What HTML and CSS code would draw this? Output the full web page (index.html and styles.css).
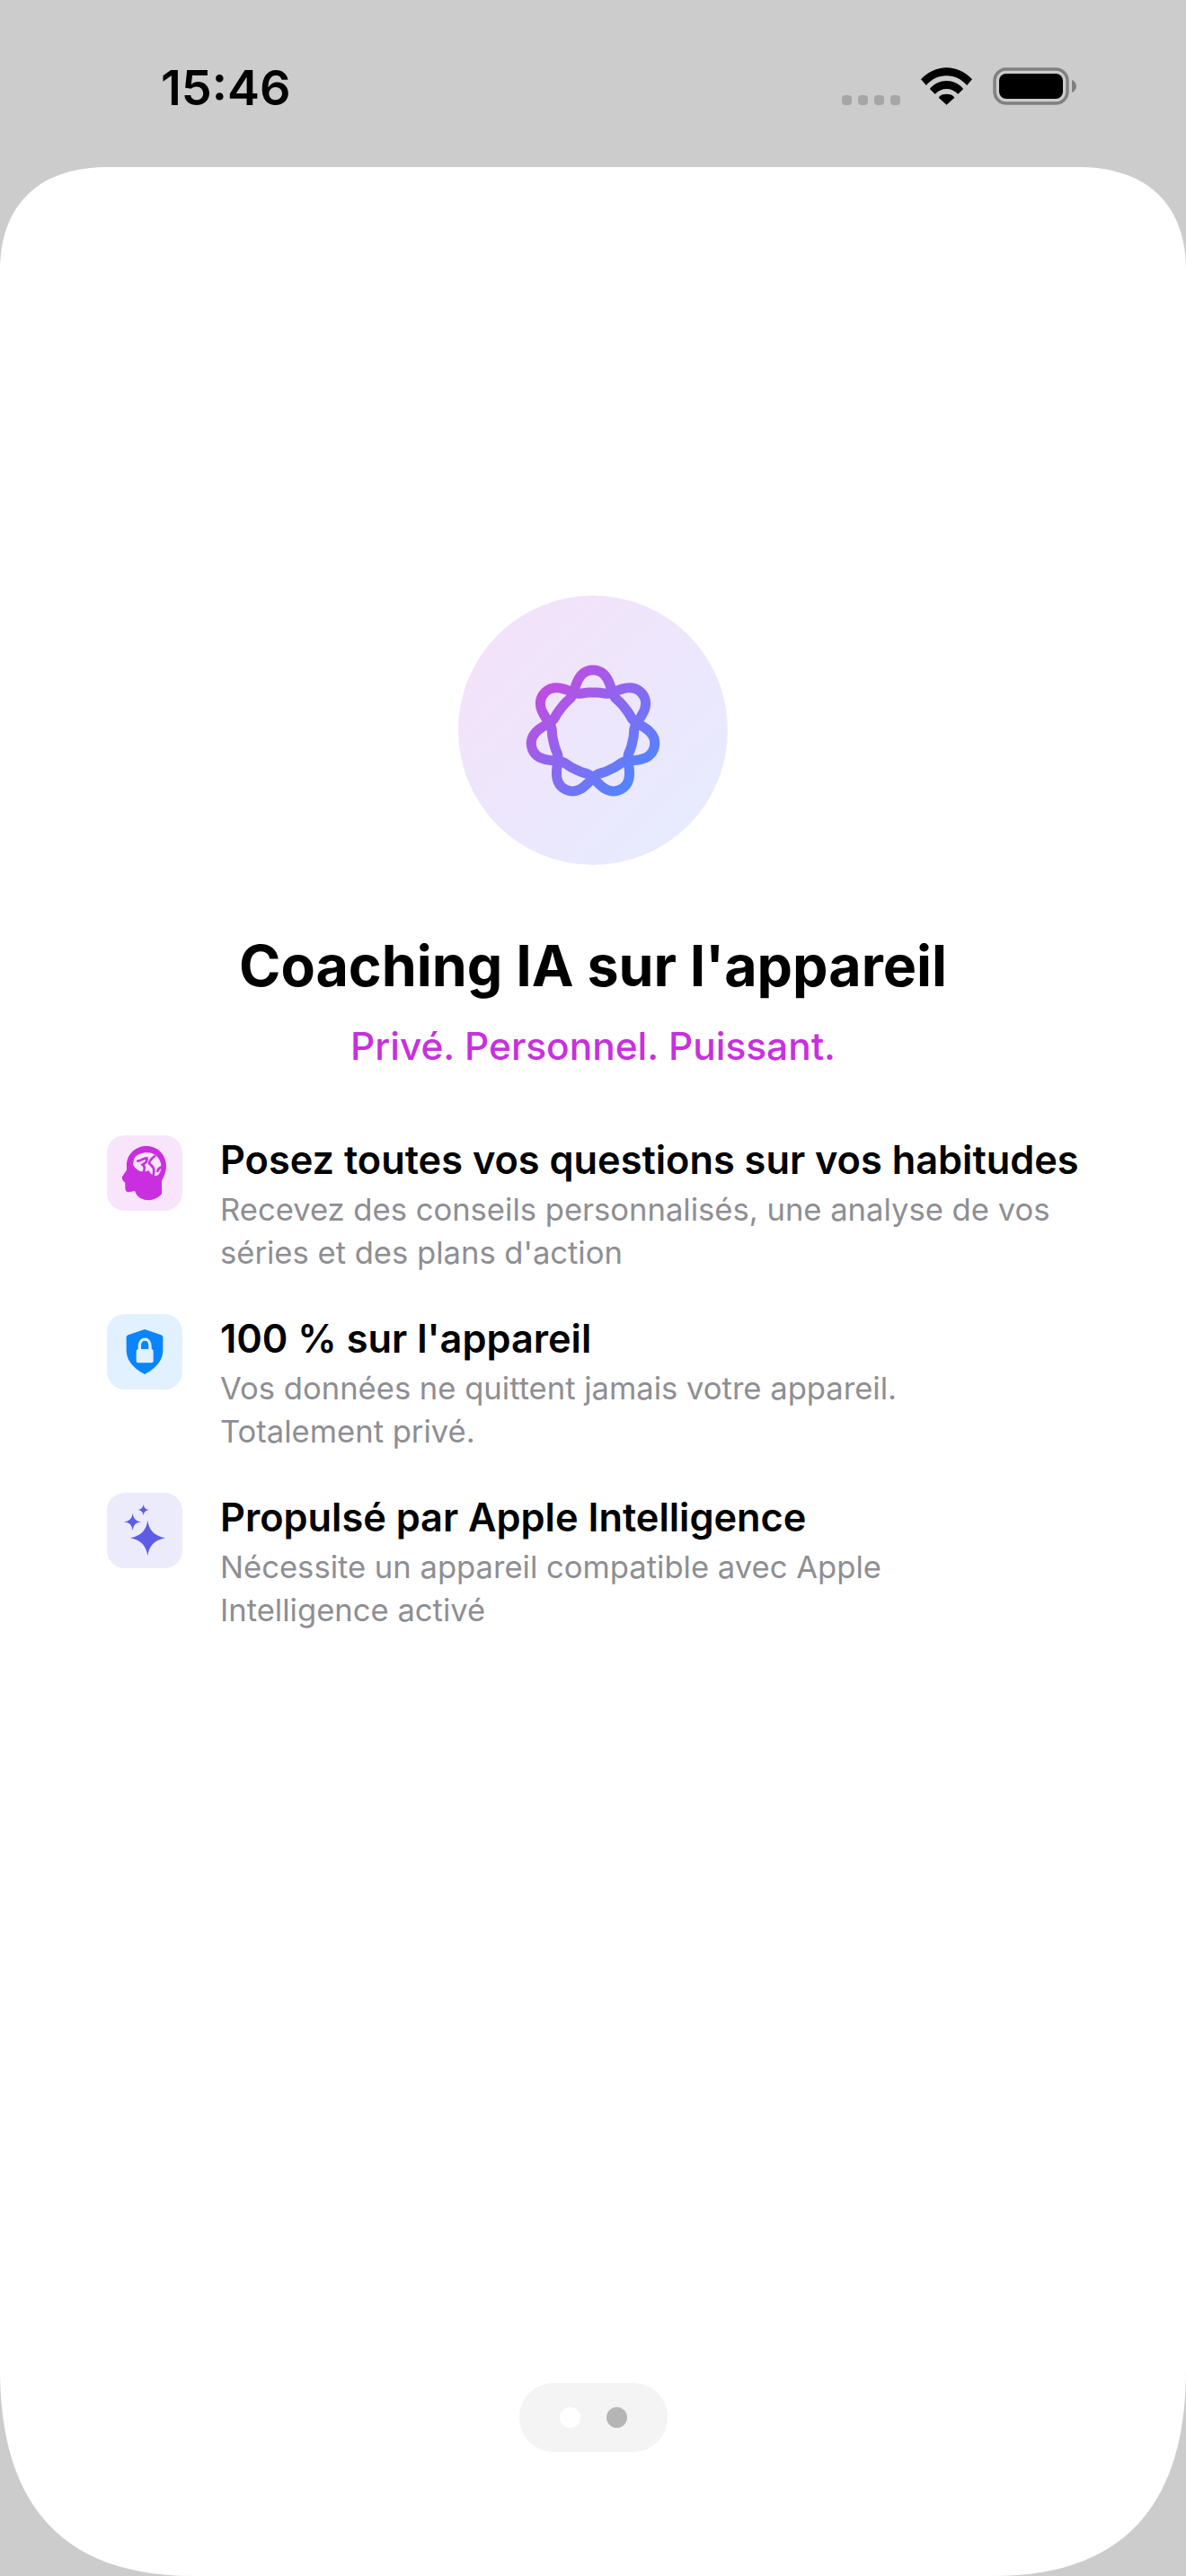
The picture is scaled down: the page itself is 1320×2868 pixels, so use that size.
FILE: index.html
```html
<!DOCTYPE html>
<html>
<head>
  <title>Coaching IA</title>
  <meta charset="UTF-8" />
  <link rel="stylesheet" href="styles.css">
</head>
<body>

  <div class="status-bar">
    <span class="time">15:46</span>
    <div class="status-icons">
      <svg class="signal" width="65" height="11" viewBox="0 0 65 11">
        <rect x="0" y="0" width="11" height="11" rx="4" />
        <rect x="18" y="0" width="11" height="11" rx="4" />
        <rect x="36" y="0" width="11" height="11" rx="4" />
        <rect x="54" y="0" width="11" height="11" rx="4" />
      </svg>
      <svg class="wifi" width="57" height="42" viewBox="0 0 58 42">
        <path d="M0 13 C8 5 18 0 29 0 C40 0 50 5 58 13 L52 20 C46 13 38 9 29 9 C20 9 12 13 6 20 Z" />
        <path d="M10 24 C15 18 22 15 29 15 C36 15 43 18 48 24 L42 30 C38 26 34 24 29 24 C24 24 20 26 16 30 Z" />
        <path d="M20 34 C22 31 25 30 29 30 C33 30 36 31 38 34 L29 42 Z" />
      </svg>
      <svg class="battery" width="93" height="42" viewBox="0 0 93 42">
        <rect x="2" y="2" width="81" height="38" rx="13" fill="none" stroke="#808080" stroke-width="3.5" />
        <rect x="7" y="7" width="71" height="28" rx="8" fill="#000" />
        <path d="M88 14 C91 15 93 18 93 21 C93 24 91 27 88 28 Z" fill="#808080" />
      </svg>
    </div>
  </div>

  <main class="card">
    <div class="hero">
      <svg width="300" height="300" viewBox="0 0 300 300">
        <defs>
          <linearGradient id="ringGrad" x1="0.1" y1="0.1" x2="0.9" y2="0.9">
            <stop offset="0" stop-color="#c44ae0" />
            <stop offset="1" stop-color="#4f86ff" />
          </linearGradient>
        </defs>
        <path id="ring" fill="none" stroke="url(#ringGrad)" stroke-width="11" />
      </svg>
    </div>

    <h1 class="title">Coaching IA sur l'appareil</h1>
    <p class="tagline">Privé. Personnel. Puissant.</p>

    <ul class="features">
      <li class="feature">
        <div class="feature-icon icon-pink">
          <svg width="84" height="84" viewBox="57 72 252 252">
            <path fill="#c92fdf" d="M188 108 C228 108 255 138 255 175 C255 195 247 210 240 225 L240 268 C225 285 205 290 190 288 C170 286 158 278 150 258 L130 262 C122 262 118 256 118 248 L118 230 C112 226 106 218 108 210 L123 188 L123 168 C125 132 155 108 188 108 Z" />
            <path fill="#f8e4fb" d="M148 150 C155 135 178 128 197 130 C218 132 236 150 238 172 C240 190 232 206 220 208 C210 208 200 198 197 190 L180 194 C165 194 148 182 144 168 Z" />
            <path fill="none" stroke="#c92fdf" stroke-width="8" stroke-linecap="round" d="M160 158 C170 158 178 148 190 148 C194 158 184 166 176 170 C184 176 184 186 178 196" />
            <path fill="none" stroke="#c92fdf" stroke-width="8" stroke-linecap="round" d="M216 142 C206 150 198 160 198 166 C204 172 214 176 214 190 L212 208" />
            <path fill="none" stroke="#c92fdf" stroke-width="8" stroke-linecap="round" d="M240 178 C232 180 228 184 226 192" />
          </svg>
        </div>
        <div class="feature-text">
          <h2>Posez toutes vos questions sur vos habitudes</h2>
          <p>Recevez des conseils personnalisés, une analyse de vos séries et des plans d'action</p>
        </div>
      </li>
      <li class="feature">
        <div class="feature-icon icon-blue">
          <svg width="84" height="84" viewBox="57 69 252 252">
            <path fill="#0a84ff" d="M183 120 L238 139 C242 141 244 144 244 148 L244 190 C244 226 218 252 183 270 C148 252 122 226 122 190 L122 148 C122 144 124 141 128 139 Z" />
            <path fill="none" stroke="#e1f1ff" stroke-width="10" d="M166 192 L166 176 C166 146 201 146 201 176 L201 192" />
            <rect x="155" y="186" width="57" height="46" rx="8" fill="#e1f1ff" />
          </svg>
        </div>
        <div class="feature-text">
          <h2>100 % sur l'appareil</h2>
          <p>Vos données ne quittent jamais votre appareil. Totalement privé.</p>
        </div>
      </li>
      <li class="feature">
        <div class="feature-icon icon-purple">
          <svg width="84" height="84" viewBox="57 66 252 252">
            <path fill="#5e5ce6" d="M193 158 C198 190 212 208 252 217 C212 226 198 244 193 277 C188 244 174 226 135 217 C174 208 188 190 193 158 Z" />
            <path fill="#5e5ce6" d="M143 134 C146 153 153 160 172 163 C153 166 146 173 143 193 C140 173 133 166 113 163 C133 160 140 153 143 134 Z" />
            <path fill="#5e5ce6" d="M179 104 C181 116 186 121 198 123 C186 125 181 130 179 142 C177 130 172 125 160 123 C172 121 177 116 179 104 Z" />
          </svg>
        </div>
        <div class="feature-text">
          <h2>Propulsé par Apple Intelligence</h2>
          <p>Nécessite un appareil compatible avec Apple Intelligence activé</p>
        </div>
      </li>
    </ul>

    <div class="pager">
      <span class="dot"></span>
      <span class="dot dot-active"></span>
    </div>
  </main>

  <script src="script.js"></script>
</body>
</html>
```

FILE: styles.css
```css
* {
  box-sizing: border-box;
}

html, body {
  margin: 0;
  padding: 0;
}

body {
  width: 1320px;
  height: 2868px;
  background: #cccccc;
  font-family: Inter, 'Noto Sans', sans-serif;
  color: black;
  overflow: hidden;
}

.status-bar {
  height: 186px;
  padding: 70px 122px 0 179px;
  display: flex;
  justify-content: space-between;
  align-items: flex-start;
}

.time {
  font-size: 54px;
  line-height: 56px;
  font-weight: 600;
}

.status-icons {
  display: flex;
  align-items: flex-end;
  gap: 23px;
  padding-top: 5px;
}

.signal {
  fill: #a6a6a6;
}

.card {
  height: 2682px;
  background: white;
  display: flex;
  flex-direction: column;
  align-items: center;
  padding-top: 477px;
  clip-path: path('M0 115 C0 45 40 0 120 0 L1200 0 C1280 0 1320 45 1320 115 L1320 2452 C1320 2592 1260 2682 1105 2682 L215 2682 C60 2682 0 2592 0 2452 Z');
}

.hero {
  width: 300px;
  height: 300px;
  border-radius: 50%;
  background: linear-gradient(135deg, #f5e1f9, #e5ecff);
}

.title {
  margin: 0;
  margin-top: 74px;
  font-size: 62.7px;
  line-height: 76px;
  font-weight: 700;
}

.tagline {
  margin: 0;
  margin-top: 27px;
  font-size: 42.4px;
  line-height: 50px;
  font-weight: 500;
  color: #c92fdf;
}

.features {
  list-style: none;
  margin: 0;
  margin-top: 74px;
  padding: 0 0 0 119px;
  width: 100%;
  display: flex;
  flex-direction: column;
  gap: 45px;
}

.feature {
  display: flex;
  gap: 42px;
  align-items: flex-start;
}

.feature-icon {
  flex: none;
  width: 84px;
  height: 84px;
  border-radius: 20px;
  display: flex;
  align-items: center;
  justify-content: center;
}

.icon-pink {
  background: #f8e4fb;
}

.icon-blue {
  background: #e1f1ff;
}

.icon-purple {
  background: #ebebfc;
}

.feature-text h2 {
  margin: 0;
  margin-bottom: 4px;
  font-size: 43.3px;
  line-height: 54px;
  font-weight: 600;
  white-space: nowrap;
}

.feature-text p {
  margin: 0;
  max-width: 926px;
  font-size: 34.6px;
  line-height: 48px;
  color: #8e8e93;
}

.pager {
  margin-top: auto;
  margin-bottom: 138px;
  width: 165px;
  height: 77px;
  border-radius: 38px;
  background: #f4f4f4;
  display: flex;
  align-items: center;
  justify-content: center;
  gap: 29px;
}

.dot {
  width: 23px;
  height: 23px;
  border-radius: 50%;
  background: white;
}

.dot-active {
  background: #b5b5b5;
}
```

FILE: script.js
```js
// seven-lobed ring, one closed curve that goes round twice
const ring = document.getElementById('ring');
const cx = 150;
const cy = 153;
let d = '';

for (let i = 0; i <= 560; i++) {
  const t = (i / 560) * 4 * Math.PI;
  const u = 3.5 * t;
  const r = 54.33 + 12.89 * Math.cos(u) + 3.75 * Math.cos(2 * u) - 0.39 * Math.cos(3 * u) - 0.58 * Math.cos(4 * u);
  const x = cx + r * Math.sin(t);
  const y = cy - r * Math.cos(t);
  d += (i === 0 ? 'M' : 'L') + x.toFixed(2) + ' ' + y.toFixed(2) + ' ';
}

ring.setAttribute('d', d + 'Z');
```
